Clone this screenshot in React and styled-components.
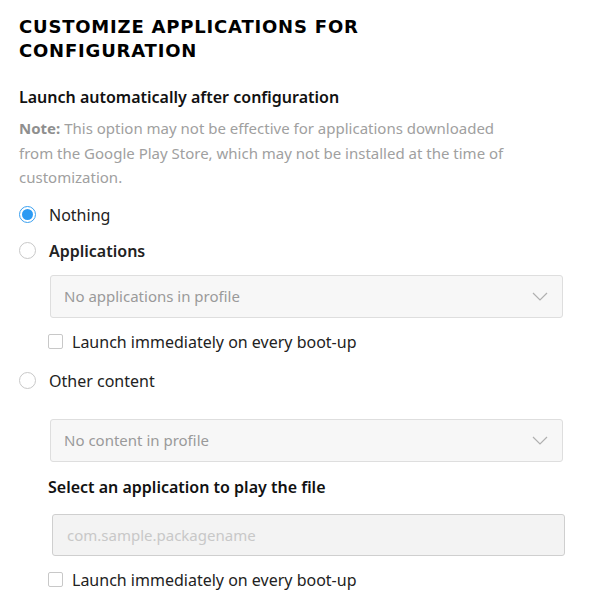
import styled, { createGlobalStyle } from "styled-components";

const GlobalStyle = createGlobalStyle`
  body {
    margin: 0;
    background: #fff;
    font-family: "Noto Sans", "Liberation Sans", sans-serif;
    color: #222;
  }
`;

const ChevronDown = () => (
  <svg width="16" height="9" viewBox="0 0 16 9" fill="none">
    <path d="M1 1l7 7 7-7" stroke="#b0b0b0" strokeWidth="1.2" />
  </svg>
);

const App = () => {
  return (
    <Page>
      <GlobalStyle />
      <Title>Customize applications for configuration</Title>
      <Subtitle>Launch automatically after configuration</Subtitle>
      <Note>
        <NoteLead>Note:</NoteLead> This option may not be effective for applications downloaded
        from the Google Play Store, which may not be installed at the time of
        customization.
      </Note>

      <RadioRow>
        <Radio checked />
        <RadioLabel>Nothing</RadioLabel>
      </RadioRow>

      <RadioRow>
        <Radio />
        <RadioLabel bold>Applications</RadioLabel>
      </RadioRow>
      <Indent>
        <Select>
          <span>No applications in profile</span>
          <ChevronDown />
        </Select>
        <CheckRow bottom={9}>
          <Checkbox />
          <span>Launch immediately on every boot-up</span>
        </CheckRow>
      </Indent>

      <RadioRow>
        <Radio />
        <RadioLabel>Other content</RadioLabel>
      </RadioRow>
      <Indent>
        <Select top={20}>
          <span>No content in profile</span>
          <ChevronDown />
        </Select>
        <FieldLabel>Select an application to play the file</FieldLabel>
        <TextInput placeholder="com.sample.packagename" disabled />
        <CheckRow>
          <Checkbox />
          <span>Launch immediately on every boot-up</span>
        </CheckRow>
      </Indent>
    </Page>
  );
};

export default App;

//styles
const Page = styled.div`
  width: 615px;
  height: 607px;
  padding: 15px 19px 0;
  box-sizing: border-box;
  overflow: hidden;
`;
const Title = styled.h1`
  margin: 0;
  max-width: 400px;
  font-family: "DejaVu Sans", sans-serif;
  font-weight: 700;
  font-size: 18px;
  line-height: 24px;
  letter-spacing: 0.8px;
  text-transform: uppercase;
  color: #000;
`;
const Subtitle = styled.h2`
  margin: 23px 0 0;
  font-size: 16px;
  font-weight: 600;
  line-height: 22px;
  color: #111;
`;
const Note = styled.p`
  margin: 8px 0 7px;
  font-size: 15px;
  line-height: 24.5px;
  color: #a0a0a0;
  max-width: 500px;
`;
const NoteLead = styled.strong`
  font-weight: 700;
  color: #8f8f8f;
`;
const RadioRow = styled.label`
  display: flex;
  align-items: center;
  gap: 13px;
  height: 36px;
`;
const Radio = styled.span`
  width: 17px;
  height: 17px;
  border-radius: 50%;
  box-sizing: border-box;
  border: 1px solid ${(p) => (p.checked ? "#3aa0f0" : "#c8c8c8")};
  display: flex;
  align-items: center;
  justify-content: center;
  &::after {
    content: "";
    width: 11px;
    height: 11px;
    border-radius: 50%;
    background: ${(p) => (p.checked ? "#2b9af3" : "transparent")};
  }
`;
const RadioLabel = styled.span`
  font-size: 16px;
  font-weight: ${(p) => (p.bold ? 600 : 400)};
  color: #222;
`;
const Indent = styled.div`
  padding-left: 31px;
`;
const Select = styled.div`
  margin-top: ${(p) => p.top || 6}px;
  height: 43px;
  width: 513px;
  box-sizing: border-box;
  border: 1px solid #dedede;
  border-radius: 3px;
  background: #f7f7f7;
  display: flex;
  align-items: center;
  justify-content: space-between;
  padding: 0 14px 0 13px;
  font-size: 15px;
  color: #9a9a9a;
`;
const CheckRow = styled.label`
  display: flex;
  align-items: center;
  gap: 9px;
  height: 24px;
  margin: 12px 0 ${(p) => p.bottom || 0}px -2px;
  font-size: 16px;
  color: #222;
`;
const Checkbox = styled.span`
  width: 15px;
  height: 15px;
  box-sizing: border-box;
  border: 1px solid #c8c8c8;
  border-radius: 2px;
  background: #fff;
`;
const FieldLabel = styled.div`
  margin: 14px 0 0 -2px;
  font-size: 16px;
  font-weight: 600;
  line-height: 22px;
  color: #111;
`;
const TextInput = styled.input`
  display: block;
  margin: 16px 0 0 2px;
  width: 513px;
  height: 42px;
  box-sizing: border-box;
  border: 1px solid #cfcfcf;
  border-radius: 3px;
  background: #f3f3f3;
  padding: 0 14px;
  font-family: inherit;
  font-size: 15px;
  &::placeholder {
    color: #c8c8c8;
  }
`;
